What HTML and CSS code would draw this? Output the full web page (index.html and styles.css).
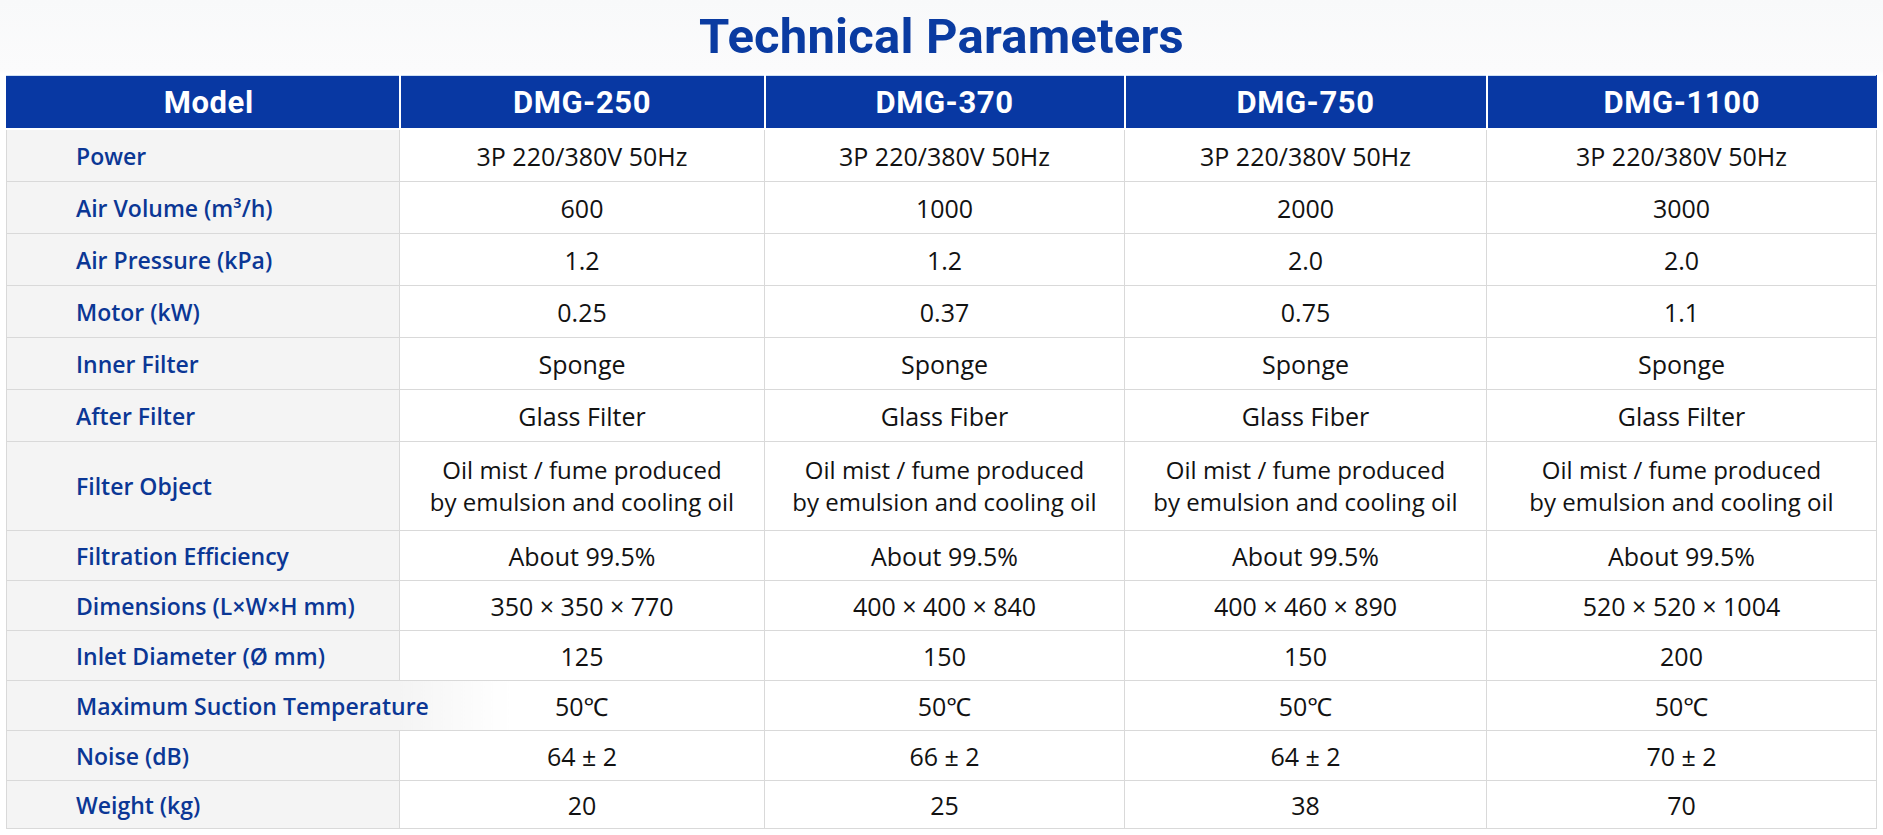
FILE: index.html
```html
<!DOCTYPE html>
<html lang="en">
<head>
<meta charset="utf-8">
<title>Technical Parameters</title>
<link rel="stylesheet" href="styles.css">
</head>
<body>
<main class="page">
  <h1 class="title">Technical Parameters</h1>
  <table class="spec">
    <colgroup>
      <col class="c-label">
      <col class="c1">
      <col class="c2">
      <col class="c3">
      <col class="c4">
    </colgroup>
    <thead>
      <tr>
        <th class="h-model">Model</th>
        <th>DMG-250</th>
        <th>DMG-370</th>
        <th>DMG-750</th>
        <th>DMG-1100</th>
      </tr>
    </thead>
    <tbody>
      <tr class="r-first">
        <td class="label">Power</td>
        <td>3P 220/380V 50Hz</td>
        <td>3P 220/380V 50Hz</td>
        <td>3P 220/380V 50Hz</td>
        <td>3P 220/380V 50Hz</td>
      </tr>
      <tr>
        <td class="label">Air Volume (m³/h)</td>
        <td>600</td>
        <td>1000</td>
        <td>2000</td>
        <td>3000</td>
      </tr>
      <tr>
        <td class="label">Air Pressure (kPa)</td>
        <td>1.2</td>
        <td>1.2</td>
        <td>2.0</td>
        <td>2.0</td>
      </tr>
      <tr>
        <td class="label">Motor (kW)</td>
        <td>0.25</td>
        <td>0.37</td>
        <td>0.75</td>
        <td>1.1</td>
      </tr>
      <tr>
        <td class="label">Inner Filter</td>
        <td>Sponge</td>
        <td>Sponge</td>
        <td>Sponge</td>
        <td>Sponge</td>
      </tr>
      <tr>
        <td class="label">After Filter</td>
        <td>Glass Filter</td>
        <td>Glass Fiber</td>
        <td>Glass Fiber</td>
        <td>Glass Filter</td>
      </tr>
      <tr class="r-tall">
        <td class="label">Filter Object</td>
        <td class="multi">Oil mist / fume produced<br>by emulsion and cooling oil</td>
        <td class="multi">Oil mist / fume produced<br>by emulsion and cooling oil</td>
        <td class="multi">Oil mist / fume produced<br>by emulsion and cooling oil</td>
        <td class="multi">Oil mist / fume produced<br>by emulsion and cooling oil</td>
      </tr>
      <tr class="r-low">
        <td class="label">Filtration Efficiency</td>
        <td>About 99.5%</td>
        <td>About 99.5%</td>
        <td>About 99.5%</td>
        <td>About 99.5%</td>
      </tr>
      <tr class="r-low">
        <td class="label">Dimensions (L×W×H mm)</td>
        <td>350 × 350 × 770</td>
        <td>400 × 400 × 840</td>
        <td>400 × 460 × 890</td>
        <td>520 × 520 × 1004</td>
      </tr>
      <tr class="r-low">
        <td class="label">Inlet Diameter (Ø mm)</td>
        <td>125</td>
        <td>150</td>
        <td>150</td>
        <td>200</td>
      </tr>
      <tr class="r-low">
        <td class="label label-wide">Maximum Suction Temperature</td>
        <td class="after-wide">50℃</td>
        <td>50℃</td>
        <td>50℃</td>
        <td>50℃</td>
      </tr>
      <tr class="r-low">
        <td class="label">Noise (dB)</td>
        <td>64 ± 2</td>
        <td>66 ± 2</td>
        <td>64 ± 2</td>
        <td>70 ± 2</td>
      </tr>
      <tr class="r-last">
        <td class="label">Weight (kg)</td>
        <td>20</td>
        <td>25</td>
        <td>38</td>
        <td>70</td>
      </tr>
    </tbody>
  </table>
</main>
</body>
</html>
```

FILE: styles.css
```css
html, body {
  margin: 0;
  padding: 0;
  background: #ffffff;
}

body {
  font-family: "Open Sans", "Noto Sans", "Liberation Sans", sans-serif;
  color: #141414;
}

.page {
  width: 1883px;
  height: 835px;
  padding-top: 8px;
  box-sizing: border-box;
  background: linear-gradient(to bottom, #f8f9fa 0px, #fbfbfc 70px, #ffffff 75px);
}

.title {
  margin: 0 0 9px 0;
  height: 58px;
  font-family: "Roboto", "Liberation Sans", sans-serif;
  font-weight: 700;
  font-size: 49px;
  line-height: 58px;
  letter-spacing: 0.2px;
  color: #0a3ba1;
  text-align: center;
}

.spec {
  width: 1870px;
  margin: 0 auto;
  border-collapse: collapse;
  table-layout: fixed;
  background: #ffffff;
}

.c-label { width: 393px; }
.c1 { width: 365px; }
.c2 { width: 360px; }
.c3 { width: 362px; }
.c4 { width: 390px; }

.spec thead th {
  height: 52px;
  padding: 0;
  background: #0838a3;
  color: #ffffff;
  font-family: "Roboto", "Liberation Sans", sans-serif;
  font-weight: 700;
  font-size: 31px;
  letter-spacing: 0.6px;
  text-align: center;
  vertical-align: middle;
  border-left: 2px solid #ffffff;
  border-bottom: 2px solid #ffffff;
  border-top: 1px solid #cfe0f3;
}

.spec thead th.h-model {
  padding-left: 12px;
}

.spec thead th:first-child {
  border-left: 1px solid #0838a3;
}

.spec thead th:last-child {
  border-right: 1px solid #0838a3;
}

.spec tbody td {
  height: 51px;
  padding: 0;
  border: 1px solid #d9d9d9;
  text-align: center;
  vertical-align: middle;
  font-size: 25px;
  line-height: 30px;
  color: #121212;
  white-space: nowrap;
}

.spec tbody tr.r-first td { height: 51px; }
.spec tbody tr.r-tall td { height: 88px; }
.spec tbody tr.r-low td { height: 49px; }
.spec tbody tr.r-last td { height: 47px; }

.spec tbody td.label {
  background: #f4f4f4;
  text-align: left;
  padding-left: 69px;
  font-size: 23px;
  font-weight: 600;
  color: #0b3795;
}

.spec tbody td.multi {
  font-size: 24px;
  line-height: 32px;
}

.spec tbody td.label-wide {
  overflow: visible;
  border-right-style: hidden;
}

.spec tbody td.after-wide {
  background: linear-gradient(to right, #f4f4f4 0px, #f8f8f8 40px, #ffffff 110px);
}
```
